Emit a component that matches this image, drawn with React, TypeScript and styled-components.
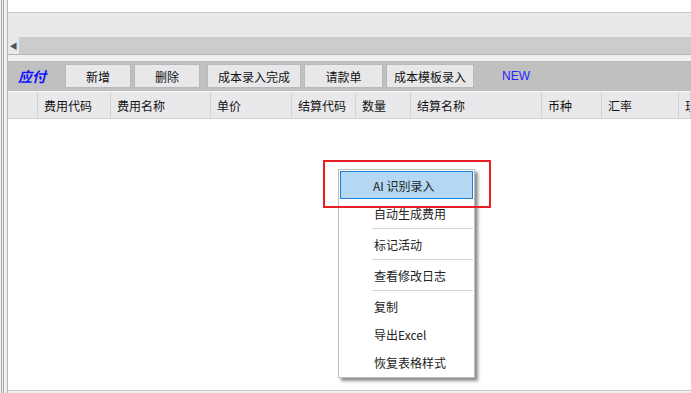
import React from 'react';
import styled, { createGlobalStyle } from 'styled-components';

const GlobalStyle = createGlobalStyle`
  html, body {
    margin: 0;
    padding: 0;
    background: #f0f0f0;
    font-family: "Noto Sans CJK SC", "Noto Sans", sans-serif;
    font-size: 12px;
    overflow: hidden;
  }
`;

const Screen = styled.div`
  position: relative;
  display: flex;
  width: 691px;
  height: 393px;
  overflow: hidden;
  background: #f0f0f0;
`;

// the two thin splitter lines on the far left
const Gutter = styled.div`
  margin-left: 1px;
  width: 1px;
  border-left: 1px solid #a9a9a9;
  border-right: 1px solid #a9a9a9;
  margin-right: 3px;
`;

const Panel = styled.div`
  flex: 1;
  display: flex;
  flex-direction: column;
  border-left: 1px solid #b4b4b4;
  min-width: 0;
`;

const UpperGrid = styled.div`
  height: 12px;
  background: #fff;
  border-bottom: 1px solid #c8c8c8;
`;

const UpperFooter = styled.div`
  height: 24px;
  background: #e9e9eb;
`;

const HScroll = styled.div`
  display: flex;
  height: 17px;
  background: #cccccc;
  border-bottom: 1px solid #b4b4b4;
`;

const ScrollButton = styled.div`
  width: 11px;
  display: flex;
  align-items: center;
  justify-content: center;
  background: #e9e9eb;
  color: #555;
  font-size: 8px;
`;

const Spacer = styled.div`
  height: 6px;
`;

const Toolbar = styled.div`
  display: flex;
  align-items: center;
  height: 30px;
  background: #c0c0c0;
  padding-left: 10px;
`;

const Title = styled.span`
  width: 47px;
  color: #1010ff;
  font-weight: bold;
  font-style: italic;
  font-size: 14px;
`;

const ToolButton = styled.div<{ $w: number; $gap: number }>`
  box-sizing: border-box;
  width: ${(p) => p.$w}px;
  height: 24px;
  margin-right: ${(p) => p.$gap}px;
  display: flex;
  align-items: center;
  justify-content: center;
  background: #e8e8ea;
  border: 1px solid #b9b9b9;
  color: #111;
`;

const NewTag = styled.span`
  margin-left: 28px;
  color: #2323ff;
  font-family: "Liberation Sans", Arial, sans-serif;
  font-size: 12px;
`;

const HeaderRow = styled.div`
  display: flex;
  height: 26px;
  background: #e9e9ec;
  border-top: 1px solid #f4f4f4;
  border-bottom: 1px solid #d2d2d2;
`;

const HeadCell = styled.div<{ $w?: number }>`
  box-sizing: border-box;
  ${(p) => (p.$w ? `width: ${p.$w}px; flex: none;` : 'flex: 1;')}
  border-right: 1px solid #d4d4d4;
  padding-left: 6px;
  display: flex;
  align-items: center;
  color: #111;
  white-space: nowrap;
  overflow: hidden;
`;

const GridBody = styled.div`
  height: 271px;
  background: #fff;
  border-bottom: 1px solid #c8c8c8;
`;

const Menu = styled.div`
  position: absolute;
  left: 338px;
  top: 169px;
  width: 137px;
  box-sizing: border-box;
  padding: 1px;
  background: #fff;
  border: 1px solid #bdbdbd;
  box-shadow: 3px 3px 3px rgba(0, 0, 0, 0.45);
`;

const MenuItem = styled.div<{ $active?: boolean }>`
  box-sizing: border-box;
  height: 28px;
  display: flex;
  align-items: center;
  padding-left: ${(p) => (p.$active ? 32 : 33)}px;
  color: #222;
  background: ${(p) => (p.$active ? '#b4d7f3' : 'transparent')};
  border: 1px solid ${(p) => (p.$active ? '#1d7fd6' : 'transparent')};
`;

const MenuSep = styled.div`
  height: 1px;
  margin: 1px 0 1px 32px;
  background: #d4d4d4;
`;

const Highlight = styled.div`
  position: absolute;
  left: 323px;
  top: 160px;
  width: 168px;
  height: 48px;
  box-sizing: border-box;
  border: 2px solid #e81e25;
`;

const columns: { name: string; w?: number }[] = [
  { name: '', w: 30 },
  { name: '费用代码', w: 73 },
  { name: '费用名称', w: 100 },
  { name: '单价', w: 81 },
  { name: '结算代码', w: 64 },
  { name: '数量', w: 55 },
  { name: '结算名称', w: 131 },
  { name: '币种', w: 60 },
  { name: '汇率', w: 77 },
  { name: '现' },
];

const buttons = [
  { label: '新增', w: 66, gap: 3 },
  { label: '删除', w: 66, gap: 7 },
  { label: '成本录入完成', w: 94, gap: 3 },
  { label: '请款单', w: 79, gap: 3 },
  { label: '成本模板录入', w: 88, gap: 0 },
];

const App = () => {
  return (
    <Screen>
      <GlobalStyle />
      <Gutter />
      <Panel>
        <UpperGrid />
        <UpperFooter />
        <HScroll>
          <ScrollButton>◀</ScrollButton>
        </HScroll>
        <Spacer />
        <Toolbar>
          <Title>应付</Title>
          {buttons.map((b) => (
            <ToolButton key={b.label} $w={b.w} $gap={b.gap}>
              {b.label}
            </ToolButton>
          ))}
          <NewTag>NEW</NewTag>
        </Toolbar>
        <HeaderRow>
          {columns.map((c, i) => (
            <HeadCell key={i} $w={c.w}>
              {c.name}
            </HeadCell>
          ))}
        </HeaderRow>
        <GridBody />
      </Panel>

      <Menu>
        <MenuItem $active>AI 识别录入</MenuItem>
        <MenuItem>自动生成费用</MenuItem>
        <MenuSep />
        <MenuItem>标记活动</MenuItem>
        <MenuSep />
        <MenuItem>查看修改日志</MenuItem>
        <MenuSep />
        <MenuItem>复制</MenuItem>
        <MenuItem>导出Excel</MenuItem>
        <MenuItem>恢复表格样式</MenuItem>
      </Menu>
      <Highlight />
    </Screen>
  );
};

export default App;
